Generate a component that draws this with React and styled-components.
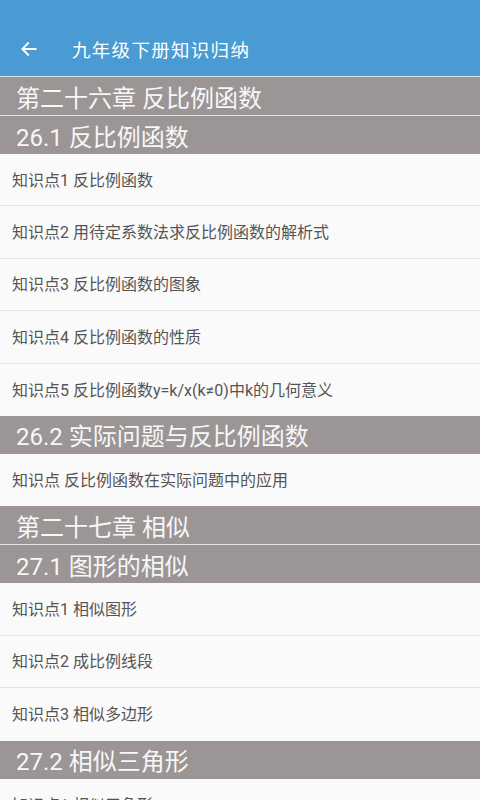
import React from 'react';
import styled, { createGlobalStyle } from 'styled-components';

const GlobalStyle = createGlobalStyle`
  html, body {
    margin: 0;
    padding: 0;
    background: #fafafa;
    font-family: Roboto, "Noto Sans CJK SC", sans-serif;
  }
`;

const StyledPage = styled.div`
  width: 480px;
  height: 800px;
  overflow: hidden;
  background: #fafafa;
`;

const StyledToolbar = styled.header`
  height: 77px;
  box-sizing: border-box;
  padding-top: 22px;
  display: flex;
  align-items: center;
  background: #4a9ad3;
  border-bottom: 1px solid #d6e4ee;
  color: #fff;

  button {
    width: 56px;
    height: 52px;
    display: flex;
    align-items: center;
    justify-content: center;
    padding: 0 0 0 2px;
    border: 0;
    background: none;
    color: inherit;
  }

  h1 {
    margin: 0 0 0 16px;
    font-size: 18.5px;
    font-weight: 400;
    letter-spacing: 1.3px;
  }
`;

const StyledHeading = styled.div`
  height: ${({ $chapter }) => ($chapter ? '39px' : '38px')};
  box-sizing: border-box;
  display: flex;
  align-items: center;
  padding-left: 16px;
  background: #9b9595;
  color: #f7f7f7;
  font-size: 24px;
  border-bottom: ${({ $chapter }) => ($chapter ? '1px solid #e6e6e6' : '0')};
`;

const StyledItem = styled.div`
  height: 52.4px;
  box-sizing: border-box;
  display: flex;
  align-items: center;
  padding-left: 12px;
  padding-bottom: 2px;
  background: #fafafa;
  color: #555;
  font-size: 16px;
  border-bottom: ${({ $last }) => ($last ? '0' : '1px solid #e2e2e2')};
`;

const content = [
  { type: 'chapter', text: '第二十六章 反比例函数' },
  { type: 'section', text: '26.1 反比例函数' },
  {
    type: 'items',
    list: [
      '知识点1 反比例函数',
      '知识点2 用待定系数法求反比例函数的解析式',
      '知识点3 反比例函数的图象',
      '知识点4 反比例函数的性质',
      '知识点5 反比例函数y=k/x(k≠0)中k的几何意义',
    ],
  },
  { type: 'section', text: '26.2 实际问题与反比例函数' },
  { type: 'items', list: ['知识点 反比例函数在实际问题中的应用'] },
  { type: 'chapter', text: '第二十七章 相似' },
  { type: 'section', text: '27.1 图形的相似' },
  { type: 'items', list: ['知识点1 相似图形', '知识点2 成比例线段', '知识点3 相似多边形'] },
  { type: 'section', text: '27.2 相似三角形' },
  { type: 'items', list: ['知识点1 相似三角形'] },
];

const BackArrow = () => (
  <svg width="20" height="20" viewBox="0 0 24 24" fill="none">
    <path
      d="M20 12H4.5M11 5l-7 7 7 7"
      stroke="#fff"
      strokeWidth="2.2"
      strokeLinecap="square"
    />
  </svg>
);

const App = () => (
  <StyledPage>
    <GlobalStyle />
    <StyledToolbar>
      <button type="button" aria-label="返回">
        <BackArrow />
      </button>
      <h1>九年级下册知识归纳</h1>
    </StyledToolbar>

    {content.map((block, i) =>
      block.type === 'items' ? (
        block.list.map((item, j) => (
          <StyledItem key={`${i}-${j}`} $last={j === block.list.length - 1}>
            {item}
          </StyledItem>
        ))
      ) : (
        <StyledHeading key={i} $chapter={block.type === 'chapter'}>
          {block.text}
        </StyledHeading>
      ),
    )}
  </StyledPage>
);

export default App;
